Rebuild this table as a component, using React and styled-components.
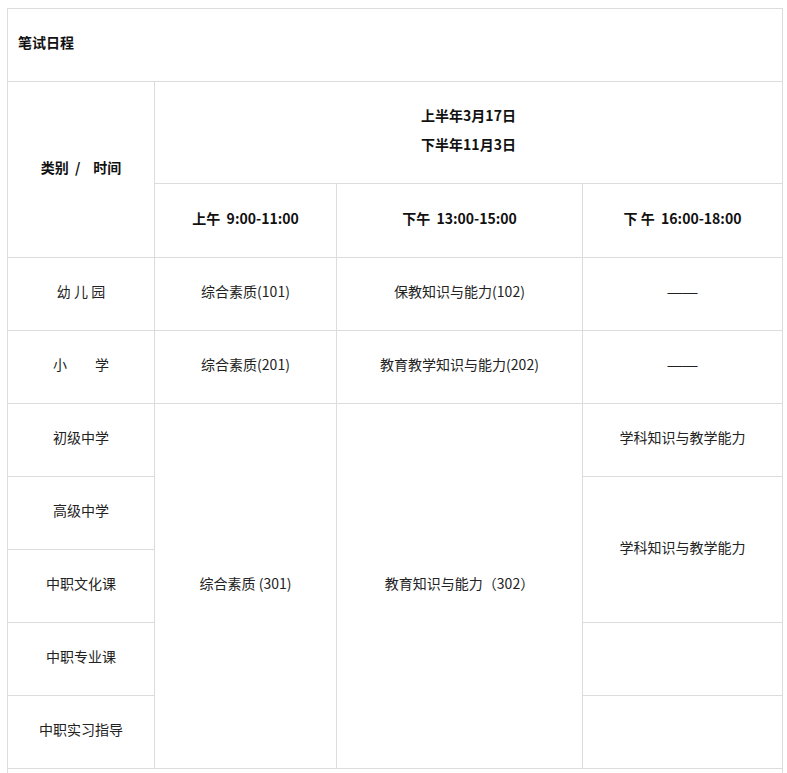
import React from 'react';
import styled, { createGlobalStyle } from 'styled-components';

const GlobalStyle = createGlobalStyle`
  html {
    overflow: hidden;
  }
  body {
    margin: 8px 0 8px 7px;
    background: #fff;
    font-family: "Noto Sans CJK SC", "Microsoft YaHei", sans-serif;
    color: #222;
  }
`;

const Schedule = styled.table`
  width: 775px;
  border-collapse: collapse;
  table-layout: fixed;
  font-size: 14px;
  line-height: 20px;
`;

const Cell = styled.td`
  border: 1px solid #dcdcdc;
  padding: 0 10px 6px;
  text-align: ${p => (p.$left ? 'left' : 'center')};
  vertical-align: middle;
  font-weight: ${p => (p.$bold ? 700 : 400)};
  color: ${p => (p.$bold ? '#111' : '#222')};
  white-space: pre;
`;

const Row = styled.tr`
  height: ${p => p.$h}px;
`;

const Line = styled.p`
  margin: 0;
  & + & {
    margin-top: 9px;
  }
`;

// the long dash is drawn with a latin font, the CJK one is too short
const Dash = styled.span`
  font-family: "Liberation Sans", Arial, sans-serif;
  font-size: 15px;
`;

const rows = [
  { label: '幼 儿 园', am: '综合素质(101)', pm: '保教知识与能力(102)' },
  { label: '小　　学', am: '综合素质(201)', pm: '教育教学知识与能力(202)' },
];

const App = () => (
  <>
    <GlobalStyle />
    <Schedule>
      <colgroup>
        <col style={{ width: 147 }} />
        <col style={{ width: 182 }} />
        <col style={{ width: 246 }} />
        <col style={{ width: 200 }} />
      </colgroup>
      <tbody>
        <Row $h={73}>
          <Cell colSpan={4} $left $bold>笔试日程</Cell>
        </Row>
        <Row $h={102}>
          <Cell rowSpan={2} $bold>{'类别  /    时间'}</Cell>
          <Cell colSpan={3} $bold>
            <Line>上半年3月17日</Line>
            <Line>下半年11月3日</Line>
          </Cell>
        </Row>
        <Row $h={74}>
          <Cell $bold>上午  9:00-11:00</Cell>
          <Cell $bold>下午  13:00-15:00</Cell>
          <Cell $bold>下 午  16:00-18:00</Cell>
        </Row>
        {rows.map(r => (
          <Row $h={73} key={r.label}>
            <Cell>{r.label}</Cell>
            <Cell>{r.am}</Cell>
            <Cell>{r.pm}</Cell>
            <Cell><Dash>——</Dash></Cell>
          </Row>
        ))}
        <Row $h={73}>
          <Cell>初级中学</Cell>
          <Cell rowSpan={5}>综合素质 (301)</Cell>
          <Cell rowSpan={5}>教育知识与能力（302）</Cell>
          <Cell>学科知识与教学能力</Cell>
        </Row>
        <Row $h={73}>
          <Cell>高级中学</Cell>
          <Cell rowSpan={2}>学科知识与教学能力</Cell>
        </Row>
        <Row $h={73}>
          <Cell>中职文化课</Cell>
        </Row>
        <Row $h={73}>
          <Cell>中职专业课</Cell>
          <Cell />
        </Row>
        <Row $h={73}>
          <Cell>中职实习指导</Cell>
          <Cell />
        </Row>
        <Row $h={73}>
          <Cell colSpan={4} />
        </Row>
      </tbody>
    </Schedule>
  </>
);

export default App;
